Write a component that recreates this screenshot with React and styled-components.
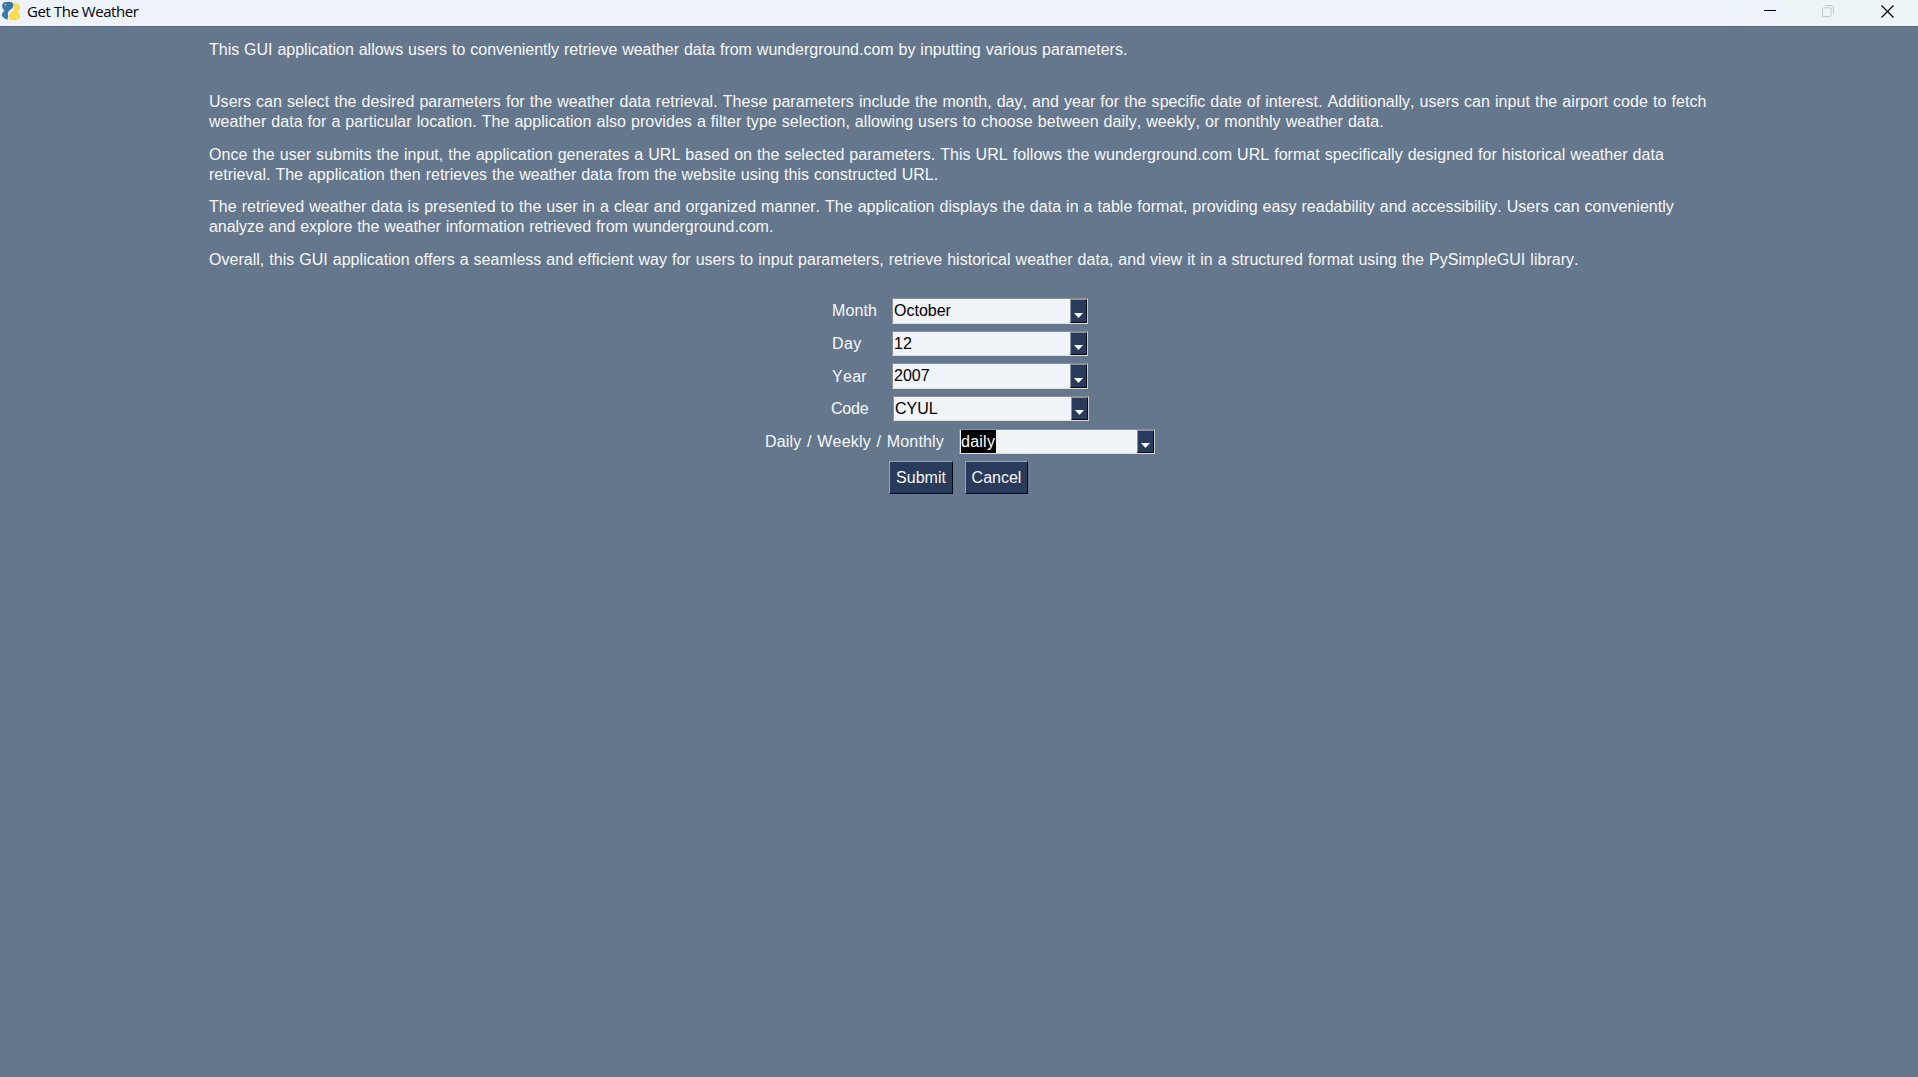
import React from 'react';
import styled, { createGlobalStyle } from 'styled-components';

const GlobalStyle = createGlobalStyle`
  *, *::before, *::after { box-sizing: border-box; }
  html, body { height: 100%; margin: 0; overflow: hidden; }
  body { background: #64778d; }
`;

const Window = styled.div`
  display: flex;
  flex-direction: column;
  width: 100%;
  height: 100vh;
  background: #64778d;
  color: #f8f8f8;
  font-family: "Liberation Sans", Arial, sans-serif;
  font-size: 16px;
  line-height: 20px;
  font-kerning: none;
  font-variant-ligatures: none;
`;

const TitleBar = styled.header`
  display: flex;
  align-items: flex-start;
  height: 26px;
  flex: none;
  background: linear-gradient(90deg, #eef3fb 0%, #eef3fb 90%, #ecf4f7 94%, #ecf4f7 100%);
  box-shadow: 0 1px 0 #596b84;
  color: #000000;
`;

const Title = styled.h1`
  flex: 1;
  margin: 0 0 0 5px;
  font: 400 15px/22px "Open Sans", "Noto Sans", sans-serif;
  letter-spacing: -0.44px;
`;

const Controls = styled.div`
  display: flex;
  align-items: center;
`;

const ControlButton = styled.button`
  display: flex;
  align-items: center;
  justify-content: center;
  width: ${(p) => p.$width}px;
  height: 22px;
  padding: 0;
  border: 0;
  background: transparent;
  color: ${(p) => (p.disabled ? '#c3c8cc' : '#000000')};
`;

const Content = styled.main`
  display: flex;
  flex-direction: column;
  align-items: center;
  padding-top: 14px;
`;

const Description = styled.section`
  width: 1500px;
`;

const Paragraph = styled.p`
  display: flex;
  flex-direction: column;
  align-items: flex-start;
  height: 52.4px;
  margin: 0;
`;

const Line = styled.span`
  white-space: pre;
  word-spacing: 0.5px;
  letter-spacing: ${(p) => p.$tracking || 0}px;
`;

const Form = styled.form`
  display: flex;
  flex-direction: column;
  align-items: center;
  gap: 7.1px;
  margin-top: -3.8px;
  padding-left: 2px;
`;

const Field = styled.label`
  display: flex;
  align-items: center;
  height: 25.5px;
`;

const FieldName = styled.span`
  width: ${(p) => p.$width}px;
  padding-top: 1px;
  white-space: pre;
  word-spacing: 1px;
  letter-spacing: ${(p) => p.$tracking || 0}px;
`;

const Combo = styled.span`
  display: flex;
  width: 196px;
  height: 25.5px;
  border: 1px solid;
  border-color: #8f9092 #c9cbcd #dcdedf #8f9092;
  background: #f0f3f7;
  color: #000000;
`;

const ComboValue = styled.span`
  flex: 1;
  padding-left: 1px;
  line-height: 24px;
`;

const Selection = styled.span`
  display: inline-block;
  height: 23px;
  padding-right: 1px;
  background: #000000;
  color: #ffffff;
  letter-spacing: 0.25px;
`;

const ComboArrow = styled.span`
  display: flex;
  align-items: flex-end;
  justify-content: center;
  width: 17px;
  padding-bottom: 4px;
  border: 1px solid;
  border-color: #8b94a5 #05070c #05070c #8b94a5;
  background: #283b5b;
`;

const Actions = styled.div`
  display: flex;
  gap: 12px;
  margin-right: 3px;
`;

const ActionButton = styled.button`
  width: ${(p) => p.$width}px;
  height: 33px;
  padding: 0;
  border: 1px solid;
  border-color: #9aa4b4 #05070c #05070c #9aa4b4;
  background: #283b5b;
  color: #f8f8f8;
  font: inherit;
  font-kerning: none;
`;

function Logo() {
  const half = 'M2 5 Q3 1.5 7 2 Q12 1 13.5 4 Q13.8 8 11 9.3 Q7 11.5 8 16 L7.5 19.8 Q4 19 2 16 Q1 13 4.5 11 Q1.8 8.5 2 5Z';
  return (
    <svg width="22" height="22" viewBox="0 0 22 22">
      <path d={half} fill="#3a76a8" />
      <path d={half} fill="#fddb4d" transform="rotate(180 11 11)" />
      <circle cx="5.3" cy="4.8" r="0.8" fill="#dfe9f3" />
      <circle cx="16.5" cy="17.3" r="0.8" fill="#fff8dc" />
    </svg>
  );
}

const paragraphs = [
  [['This GUI application allows users to conveniently retrieve weather data from wunderground.com by inputting various parameters.', -0.013]],
  [
    ['Users can select the desired parameters for the weather data retrieval. These parameters include the month, day, and year for the specific date of interest. Additionally, users can input the airport code to fetch', 0.055],
    ['weather data for a particular location. The application also provides a filter type selection, allowing users to choose between daily, weekly, or monthly weather data.', 0.05],
  ],
  [
    ['Once the user submits the input, the application generates a URL based on the selected parameters. This URL follows the wunderground.com URL format specifically designed for historical weather data', 0.046],
    ['retrieval. The application then retrieves the weather data from the website using this constructed URL.', 0.009],
  ],
  [
    ['The retrieved weather data is presented to the user in a clear and organized manner. The application displays the data in a table format, providing easy readability and accessibility. Users can conveniently', 0.033],
    ['analyze and explore the weather information retrieved from wunderground.com.', -0.047],
  ],
  [['Overall, this GUI application offers a seamless and efficient way for users to input parameters, retrieve historical weather data, and view it in a structured format using the PySimpleGUI library.', 0.026]],
];

const fields = [
  { name: 'Month', value: 'October', width: 60, tracking: 0.1 },
  { name: 'Day', value: '12', width: 60, tracking: 0.4 },
  { name: 'Year', value: '2007', width: 60, tracking: 0.3 },
  { name: 'Code', value: 'CYUL', width: 62, tracking: -0.2 },
  { name: 'Daily / Weekly / Monthly', value: 'daily', width: 194, tracking: 0.18, selected: true },
];

export default function App() {
  return (
    <Window>
      <GlobalStyle />
      <TitleBar>
        <Logo />
        <Title>Get The Weather</Title>
        <Controls>
          <ControlButton $width={58} aria-label="Minimize">
            <svg width="12" height="12"><path d="M0 5.5H12" stroke="currentColor" /></svg>
          </ControlButton>
          <ControlButton $width={58} aria-label="Restore" disabled>
            <svg width="12" height="12" viewBox="0 0 12 12" fill="none" stroke="currentColor">
              <rect x=".5" y="2.8" width="8.7" height="8.7" rx="1.3" />
              <path d="M3 .5H9A2.5 2.5 0 0 1 11.5 3V9" />
            </svg>
          </ControlButton>
          <ControlButton $width={61} aria-label="Close">
            <svg width="13" height="13" stroke="currentColor" strokeWidth="1.2">
              <path d="M.5 .5L12.5 12.5M12.5 .5L.5 12.5" />
            </svg>
          </ControlButton>
        </Controls>
      </TitleBar>
      <Content>
        <Description>
          {paragraphs.map((lines, i) => (
            <Paragraph key={i}>
              {lines.map(([text, tracking]) => (
                <Line key={text} $tracking={tracking}>{text}</Line>
              ))}
            </Paragraph>
          ))}
        </Description>
        <Form>
          {fields.map((f) => (
            <Field key={f.name}>
              <FieldName $width={f.width} $tracking={f.tracking}>{f.name}</FieldName>
              <Combo>
                <ComboValue>{f.selected ? <Selection>{f.value}</Selection> : f.value}</ComboValue>
                <ComboArrow>
                  <svg width="9" height="5"><path d="M0 0H9L4.5 5Z" fill="#fff" /></svg>
                </ComboArrow>
              </Combo>
            </Field>
          ))}
          <Actions>
            <ActionButton type="button" $width={64}>Submit</ActionButton>
            <ActionButton type="button" $width={63}>Cancel</ActionButton>
          </Actions>
        </Form>
      </Content>
    </Window>
  );
}
